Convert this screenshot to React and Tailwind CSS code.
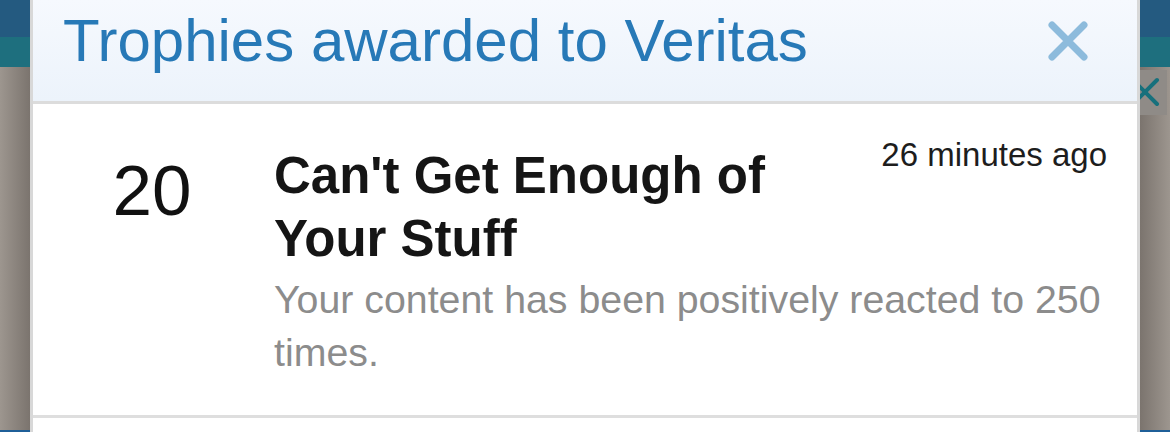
const trophy = {
  points: 20,
  title: "Can't Get Enough of Your Stuff",
  description: 'Your content has been positively reacted to 250 times.',
  time: '26 minutes ago',
};

function SideStrip({ side }) {
  const isLeft = side === 'left';
  return (
    <div className="flex h-full w-[30px] shrink-0 flex-col">
      <div className="h-[37px] bg-[#245a80]" />
      <div className="h-[30px] bg-[#1e6f7e]" />
      <div
        className={`flex-1 ${
          isLeft
            ? 'bg-gradient-to-r from-[#9d968f] to-[#7b746e]'
            : 'bg-gradient-to-r from-[#7b746e] to-[#9d968f]'
        }`}
      >
        {!isLeft && (
          <div className="mt-[3px] h-[45px] w-[27px] overflow-hidden bg-[#8f8b87]">
            <svg width="27" height="45" viewBox="0 0 27 45">
              <path d="M-7 10 L17 34 M17 10 L-7 34" stroke="#17707c" strokeWidth="4" strokeLinecap="round" />
            </svg>
          </div>
        )}
      </div>
      <div className="h-[2px] bg-[#1f5f98]" />
    </div>
  );
}

function TrophyRow({ item }) {
  return (
    <div className="flex border-b-[3px] border-[#dedede] bg-white">
      <div className="w-[238px] shrink-0 pt-[51px] text-center text-[71px] leading-[71px] text-[#111]">
        {item.points}
      </div>
      <div className="flex-1 pt-[31px] pl-[3px] pr-[30px] pb-[36px]">
        <div className="flex items-start justify-between">
          <h3 className="flex-1 pt-[9px] pr-[24px] text-[51px] font-bold leading-[63px] text-[#151515]">
            {item.title}
          </h3>
          <span className="shrink-0 text-[33px] leading-[40px] text-[#1d1d1d]">{item.time}</span>
        </div>
        <p className="mt-[3px] text-[39.3px] leading-[53px] text-[#8c8c8c]">{item.description}</p>
      </div>
    </div>
  );
}

export default function App() {
  return (
    <div className="flex h-[432px] w-[1170px] overflow-hidden font-['Liberation_Sans',Arial,sans-serif]">
      <SideStrip side="left" />
      <div className="flex h-full flex-1 flex-col border-x-[3px] border-[#d8d8d8] bg-white">
        <div className="flex h-[104px] shrink-0 items-start justify-between border-b-[3px] border-[#dcdcdc] bg-gradient-to-b from-[#f6f9fe] to-[#ecf3fb] pl-[30px] pr-[48px]">
          <h2 className="pt-[11px] text-[60px] leading-[60px] text-[#2779b7]">Trophies awarded to Veritas</h2>
          <button className="mt-[20px] flex h-[42px] w-[42px] items-center justify-center" title="Close">
            <svg width="42" height="42" viewBox="0 0 42 42">
              <path d="M5 5 L37 37 M37 5 L5 37" stroke="#8dbbdc" strokeWidth="7" strokeLinecap="round" />
            </svg>
          </button>
        </div>
        <TrophyRow item={trophy} />
      </div>
      <SideStrip side="right" />
    </div>
  );
}
